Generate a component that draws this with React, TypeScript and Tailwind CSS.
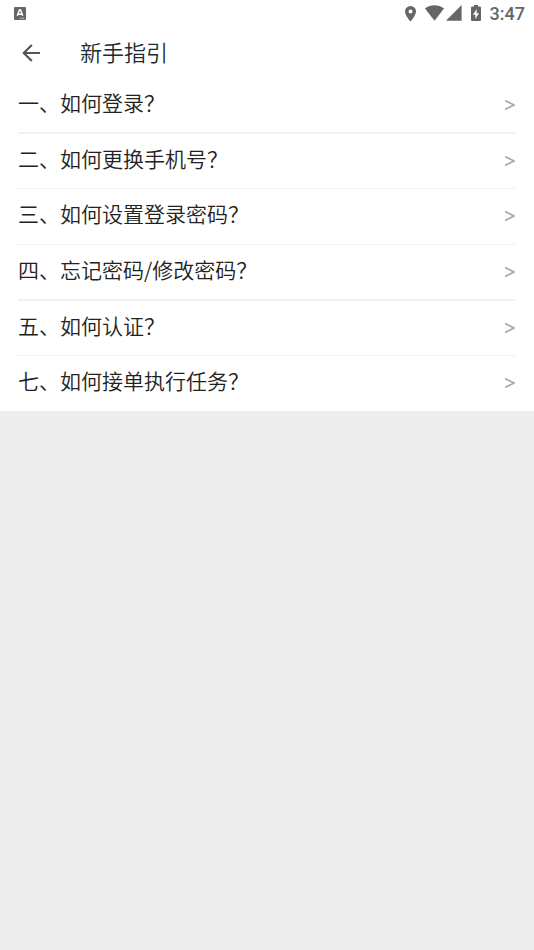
const items = [
  "一、如何登录？",
  "二、如何更换手机号？",
  "三、如何设置登录密码？",
  "四、忘记密码/修改密码？",
  "五、如何认证？",
  "七、如何接单执行任务？",
];

function StatusBar() {
  return (
    <div className="flex h-[27px] items-center justify-between pl-[14px] pr-[9px] text-[#666]">
      <svg width="12" height="13" viewBox="0 0 12 13">
        <rect width="12" height="13" rx="1" fill="currentColor" />
        <path d="M3.300 8.800 5.400 3h1.200l2.100 5.800M4.300 7.200h3.400" fill="none" stroke="#fff" strokeWidth="1.500" />
        <path d="M6 11.300h4.500" stroke="#ddd" strokeWidth="1" strokeDasharray="1 .6" />
      </svg>
      <div className="flex items-center">
        <svg width="11" height="16" viewBox="0 0 11 16" fill="currentColor">
          <path fillRule="evenodd" d="M5.500 0A5.500 5.500 0 0 0 0 5.500C0 9.600 5.500 15.600 5.500 15.600S11 9.600 11 5.500A5.500 5.500 0 0 0 5.500 0Zm0 7.500a2 2 0 1 1 0-4 2 2 0 0 1 0 4Z" />
        </svg>
        <svg className="mb-0.5 ml-[9px]" width="19" height="16" viewBox="0 0 19 16" fill="currentColor">
          <path d="M0 3.500C5.700-.8 13.300-.8 19 3.500L9.500 15.700Z" />
        </svg>
        <svg className="mb-0.5 ml-0.5" width="16" height="16" viewBox="0 0 16 16" fill="currentColor">
          <path d="M15.600 0v15.700H0Z" />
        </svg>
        <svg className="mb-0.5 ml-[9px] mr-px" width="10" height="16" viewBox="0 0 10 16" fill="currentColor">
          <path fillRule="evenodd" d="M3 0h4v1.500h2a1 1 0 0 1 1 1V15a1 1 0 0 1-1 1H1a1 1 0 0 1-1-1V2.500a1 1 0 0 1 1-1h2ZM5.700 4 2 9.700h2.300V14L8 8.200H5.700Z" />
        </svg>
        <span className="ml-2 font-[Roboto,sans-serif] text-[18px] font-medium leading-none">3:47</span>
      </div>
    </div>
  );
}

export default function App() {
  return (
    <div className="h-[950px] w-[534px] overflow-hidden bg-[#eeeded] font-['Noto_Sans_CJK_SC',sans-serif] font-[350] text-[#222]">
      <div className="bg-white">
        <StatusBar />
        <header className="flex h-[50.9px] items-center pl-[22px]">
          <svg className="mt-px" width="18" height="18" viewBox="0 0 18 18" fill="none" stroke="#555" strokeWidth="2.200">
            <path d="M18 9H2M9.800 1 1.800 9l8 8" />
          </svg>
          <h1 className="ml-10 pb-[2px] text-[22px] leading-[49px] text-[#202a32]">新手指引</h1>
        </header>
        <ul className="px-[18px]">
          {items.map((item, index) => (
            <li key={item}>
              <div className="flex h-[54.3px] items-center justify-between">
                <span lang="zh-CN" className="pb-[6px] text-[21px] leading-[48px]">{item}</span>
                <svg className="mr-px" width="10" height="12" viewBox="0 0 10 12" fill="none" stroke="#aaa" strokeWidth="1.600">
                  <path d="M0 1.500 9 6 0 10.500" />
                </svg>
              </div>
              {index < items.length - 1 && <div className="h-[1.4px] bg-[#f1f1f1]" />}
            </li>
          ))}
        </ul>
      </div>
    </div>
  );
}
